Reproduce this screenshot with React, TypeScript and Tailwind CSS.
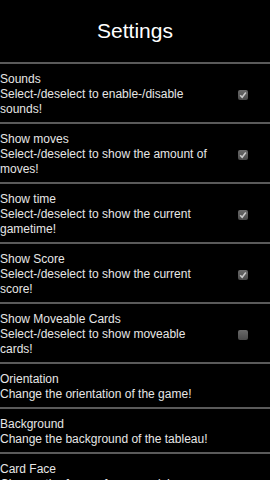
const rows: { title: string; desc: string; checked?: boolean }[] = [
  { title: 'Sounds', desc: 'Select-/deselect to enable-/disable sounds!', checked: true },
  { title: 'Show moves', desc: 'Select-/deselect to show the amount of moves!', checked: true },
  { title: 'Show time', desc: 'Select-/deselect to show the current gametime!', checked: true },
  { title: 'Show Score', desc: 'Select-/deselect to show the current score!', checked: true },
  { title: 'Show Moveable Cards', desc: 'Select-/deselect to show moveable cards!', checked: false },
  { title: 'Orientation', desc: 'Change the orientation of the game!' },
  { title: 'Background', desc: 'Change the background of the tableau!' },
  { title: 'Card Face', desc: 'Change the faces of your cards!' },
];

function Check({ on }: { on: boolean }) {
  return (
    <div className="w-[10px] h-[10px] rounded-[2px] bg-gradient-to-b from-[#6a6a6a] to-[#4a4a4a] flex items-center justify-center">
      {on && (
        <svg width="8" height="8" viewBox="0 0 8 8">
          <path d="M1.2 4.2 L3.2 6.2 L6.8 1.6" stroke="#c8c8c8" strokeWidth="1.6" fill="none" />
        </svg>
      )}
    </div>
  );
}

export default function App() {
  return (
    <div
      className="w-[270px] h-[480px] overflow-hidden bg-black text-[#e6e6e6]"
      style={{ fontFamily: '"Liberation Sans", Arial, sans-serif' }}
    >
      <div className="h-[62px] flex items-center justify-center text-[21px] text-white">Settings</div>
      {rows.map((r) => (
        <div key={r.title} className="border-t-2 border-[#5a5a5a] flex items-center pt-[8px] pb-[5px]">
          <div className="w-[218px] text-[12px] leading-[15px]">
            <div>{r.title}</div>
            <div>{r.desc}</div>
          </div>
          {r.checked !== undefined && (
            <div className="flex-1 flex justify-end pr-[22px]">
              <Check on={r.checked} />
            </div>
          )}
        </div>
      ))}
    </div>
  );
}
